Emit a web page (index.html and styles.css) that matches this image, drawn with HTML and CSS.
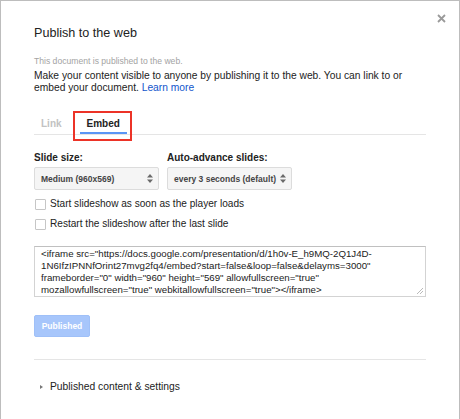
FILE: index.html
```html
<!DOCTYPE html>
<html lang="en">

<head>
    <meta charset="UTF-8">
    <meta name="viewport" content="width=device-width, initial-scale=1.0">
    <title>Publish to the web</title>
    <link rel="stylesheet" href="styles.css">
</head>

<body>
    <div class="dialog">
        <!-- 닫기 버튼 -->
        <button class="close" aria-label="Close">
            <svg width="9" height="9" viewBox="0 0 9 9">
                <path d="M1 1 L8 8 M8 1 L1 8"></path>
            </svg>
        </button>

        <h1 class="title">Publish to the web</h1>
        <p class="status">This document is published to the web.</p>
        <p class="intro">Make your content visible to anyone by publishing it to the web. You can link to or<br>
            embed your document. <a href="#">Learn more</a></p>

        <!-- 탭 -->
        <div class="tabs">
            <span class="tab">Link</span>
            <span class="tab tab-on">Embed</span>
        </div>

        <div class="fields">
            <div class="field">
                <span class="field-name">Slide size:</span>
                <span class="select">Medium (960x569)
                    <svg class="arrows" width="6" height="9" viewBox="0 0 6 9">
                        <path d="M0 3.5 L3 0 L6 3.5 Z M0 5.5 L3 9 L6 5.5 Z"></path>
                    </svg>
                </span>
            </div>
            <div class="field">
                <span class="field-name">Auto-advance slides:</span>
                <span class="select">every 3 seconds (default)
                    <svg class="arrows" width="6" height="9" viewBox="0 0 6 9">
                        <path d="M0 3.5 L3 0 L6 3.5 Z M0 5.5 L3 9 L6 5.5 Z"></path>
                    </svg>
                </span>
            </div>
        </div>

        <label class="check"><span class="box"></span>Start slideshow as soon as the player loads</label>
        <label class="check"><span class="box"></span>Restart the slideshow after the last slide</label>

        <!-- 임베드 코드 -->
        <div class="code">
            <span class="code-line">&lt;iframe src="https://docs.google.com/presentation/d/1h0v-E_h9MQ-2Q1J4D-</span>
            <span class="code-line">1N6IfzIPNNfOrint27mvg2fq4/embed?start=false&amp;loop=false&amp;delayms=3000"</span>
            <span class="code-line">frameborder="0" width="960" height="569" allowfullscreen="true"</span>
            <span class="code-line">mozallowfullscreen="true" webkitallowfullscreen="true"&gt;&lt;/iframe&gt;</span>
            <svg class="grip" width="7" height="7" viewBox="0 0 7 7">
                <path d="M1 7 L7 1 M4 7 L7 4"></path>
            </svg>
        </div>

        <button class="publish">Published</button>

        <hr class="sep">

        <div class="more"><span class="caret"></span>Published content &amp; settings</div>
    </div>
</body>

</html>
```

FILE: styles.css
```css
html,
body {
    margin: 0;
    padding: 0;
}

body {
    font-family: "Liberation Sans", Arial, sans-serif;
    color: #222;
    background-color: #fff;
}

/* 대화상자 */
.dialog {
    position: relative;
    box-sizing: border-box;
    height: 419px;
    padding: 24px 33px 0;
    border: 1px solid #bdbdbd;
    border-bottom: none;
}

/* 닫기 */
.close {
    position: absolute;
    top: 13px;
    right: 13px;
    padding: 0;
    border: none;
    background: none;
    line-height: 0;
}

.close path {
    stroke: #9a9a9a;
    stroke-width: 1.8;
}

.title {
    margin: 0;
    font-size: 12.6px;
    line-height: 16px;
    font-weight: normal;
}

.status {
    margin: 15px 0 0;
    font-size: 8.6px;
    line-height: 11px;
    color: #a3a3a3;
}

.intro {
    margin: 3px 0 0;
    font-size: 10.25px;
    line-height: 12.2px;
}

.intro a {
    color: #15c;
    text-decoration: none;
}

/* 탭 */
.tabs {
    display: flex;
    gap: 11px;
    margin-top: 24px;
    border-bottom: 1px solid #e5e5e5;
}

.tab {
    padding: 0 7px 2px;
    font-size: 10px;
    font-weight: bold;
    line-height: 12px;
    color: #c2c2c2;
    border-bottom: 2px solid transparent;
}

.tab-on {
    position: relative;
    color: #222;
    border-bottom-color: #5a95f5;
}

/* 빨간 강조 박스 */
.tab-on::after {
    content: '';
    position: absolute;
    top: -7px;
    left: -7px;
    right: -5px;
    bottom: -9px;
    border: 2px solid #ec3327;
}

.fields {
    display: flex;
    gap: 8px;
    margin-top: 17px;
}

.field {
    display: flex;
    flex-direction: column;
    gap: 3px;
}

.field-name {
    font-size: 10px;
    font-weight: bold;
    line-height: 12px;
}

.select {
    display: flex;
    align-items: center;
    justify-content: space-between;
    box-sizing: border-box;
    width: 125px;
    height: 23px;
    padding: 0 5px 0 6px;
    font-size: 8.5px;
    font-weight: bold;
    color: #444;
    background-color: #f5f5f5;
    border: 1px solid #dcdcdc;
    border-radius: 2px;
}

.arrows path {
    fill: #6a6a6a;
}

/* 체크박스 */
.check {
    display: flex;
    align-items: center;
    gap: 4px;
    margin-top: 8px;
    font-size: 10.1px;
    line-height: 12px;
}

.box {
    box-sizing: border-box;
    width: 11px;
    height: 11px;
    margin-left: 1px;
    background-color: #fff;
    border: 1px solid #c6c6c6;
    border-radius: 1px;
}

/* 코드 박스 */
.code {
    position: relative;
    box-sizing: border-box;
    height: 51px;
    margin-top: 16px;
    padding: 1px 6px 0;
    font-size: 9.7px;
    line-height: 11.7px;
    border: 1px solid #d3d3d3;
    border-top-color: #c0c0c0;
}

.code-line {
    display: block;
    white-space: nowrap;
}

.grip {
    position: absolute;
    right: 2px;
    bottom: 2px;
}

.grip path {
    stroke: #a8a8a8;
    stroke-width: 0.8;
}

.publish {
    display: block;
    width: 56px;
    height: 22px;
    margin-top: 18px;
    padding: 0;
    font-family: inherit;
    font-size: 8.5px;
    font-weight: bold;
    color: #fff;
    background-color: #a7c6fb;
    border: 1px solid #9fc0f8;
    border-radius: 2px;
}

.sep {
    margin: 22px 0 0;
    border: none;
    border-top: 1px solid #e5e5e5;
}

.more {
    display: flex;
    align-items: center;
    margin-top: 21px;
    font-size: 10.3px;
    line-height: 12px;
}

.caret {
    width: 0;
    height: 0;
    margin: 0 7px 0 6px;
    border-top: 2.5px solid transparent;
    border-bottom: 2.5px solid transparent;
    border-left: 3px solid #777;
}
```
